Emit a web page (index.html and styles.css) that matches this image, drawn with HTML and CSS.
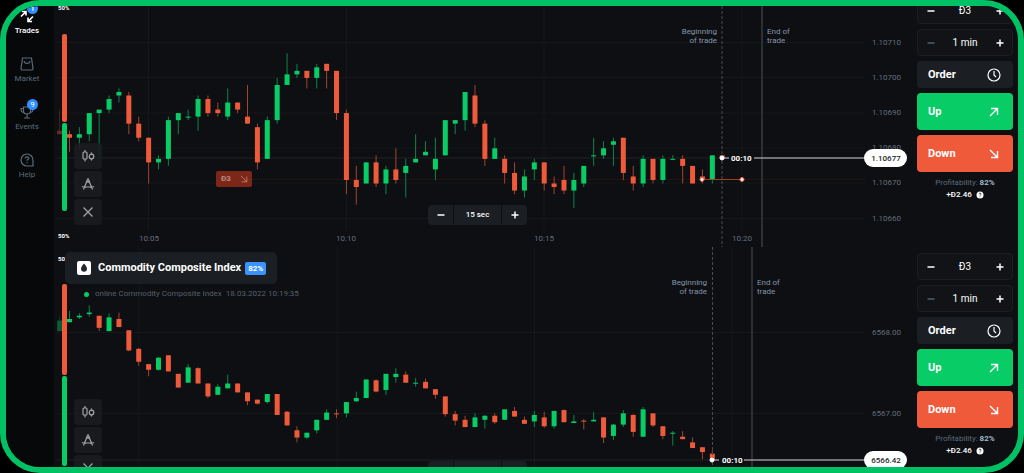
FILE: index.html
```html
<!DOCTYPE html>
<html lang="en">
<head>
    <meta charset="utf-8">
    <title>Trading terminal</title>
    <link rel="stylesheet" href="styles.css">
</head>
<body>
    <!-- shared icons -->
    <svg class="sprite" aria-hidden="true">
        <symbol id="icon-candles" viewBox="0 0 14 14">
            <path d="M4 1v2M4 10v2.500M10.500 3.500v1.500M10.500 10v1.500"/>
            <rect x="2" y="3" width="4" height="7" rx="1"/>
            <circle cx="10.500" cy="7.500" r="2.300"/>
        </symbol>
        <symbol id="icon-tools" viewBox="0 0 14 14">
            <path d="M7 1v2M6 4L2.500 12.500M8 4l3.500 8.500M1 9.500c2 1 3 .8 4 .5h4c1 .3 2 .5 4-.5"/>
            <circle cx="7" cy="4" r="1.200"/>
        </symbol>
        <symbol id="icon-close" viewBox="0 0 14 14">
            <path d="M2.500 2.500l9 9M11.500 2.500l-9 9"/>
        </symbol>
        <symbol id="icon-clock" viewBox="0 0 14 14">
            <circle cx="7" cy="7" r="6"/>
            <path d="M7 3v4l2 2"/>
        </symbol>
        <symbol id="icon-up" viewBox="0 0 10 10">
            <path d="M1 9L8.500 1.500M2 1.500h6.500V8"/>
        </symbol>
        <symbol id="icon-down" viewBox="0 0 10 10">
            <path d="M1 1l7.500 7.500M2 8.500h6.500V2"/>
        </symbol>
        <symbol id="icon-minus" viewBox="0 0 8 8">
            <path d="M.500 4h7"/>
        </symbol>
        <symbol id="icon-plus" viewBox="0 0 8 8">
            <path d="M.500 4h7M4 .500v7"/>
        </symbol>
        <symbol id="icon-info" viewBox="0 0 8 8">
            <circle cx="4" cy="4" r="3.500" fill="#fff" stroke="none"/>
            <path d="M3 3.200c0-1.400 2.200-1.300 2 0-.1.600-1 .7-1 1.400M4 5.600v.7" stroke="#0e0f13" stroke-width=".8"/>
        </symbol>
    </svg>

    <div class="frame">
        <div class="terminal">
            <nav class="nav">
                <a href="#trades" class="nav-item active">
                    <span class="nav-icon">
                        <svg viewBox="0 0 16 16"><path d="M2 8.500L7 3.500M3 3.500h4v4M14 8.500L9 13.500M9 9.500v4h4"/></svg>
                        <span class="badge">1</span>
                    </span>
                    Trades
                </a>
                <a href="#market" class="nav-item">
                    <span class="nav-icon">
                        <svg viewBox="0 0 16 16"><path d="M3.500 2h9l1.500 10.500a1.500 1.500 0 0 1-1.500 1.500h-9A1.500 1.500 0 0 1 2 12.500zM5 5c.5 3.200 5.500 3.200 6 0"/></svg>
                    </span>
                    Market
                </a>
                <a href="#events" class="nav-item">
                    <span class="nav-icon">
                        <svg viewBox="0 0 16 16"><path d="M4.500 3h7v4c0 4-7 4-7 0zM4.500 4.500H2c0 3 1 4 3 4M11.500 4.500H14c0 3-1 4-3 4M8 10v3.500M5 14h6"/></svg>
                        <span class="badge">9</span>
                    </span>
                    Events
                </a>
                <a href="#help" class="nav-item">
                    <span class="nav-icon">
                        <svg viewBox="0 0 16 16"><path d="M14 14H8a6 6 0 1 1 6-6zM6.300 6.500c0-2.300 3.600-2.200 3.400 0-.2 1-1.700 1.100-1.700 2.300M8 10.300v1"/></svg>
                    </span>
                    Help
                </a>
            </nav>

            <main class="boards">
                <section class="board">
                    <div class="chart">
                        <svg class="plot" viewBox="0 0 860 256">
                            <path class="grid" d="M3 51.500h808M3 86.500h808M3 122h808M3 157h808M3 192h808M3 227.500h808M94.500 0v239M292.500 0v239M490 0v239M688 0v239"/>
                            <path class="deal-level" d="M198 188.500h613"/>
                            <path class="price-level" d="M3 167h665"/>
                            <g class="axis">
                                <text x="818" y="54">1.10710</text>
                                <text x="818" y="89">1.10700</text>
                                <text x="818" y="124">1.10690</text>
                                <text x="818" y="159">1.10680</text>
                                <text x="818" y="194">1.10670</text>
                                <text x="818" y="230">1.10660</text>
                                <text class="time" x="95" y="250">10:05</text>
                                <text class="time" x="292" y="250">10:10</text>
                                <text class="time" x="490" y="250">10:15</text>
                                <text class="time" x="688" y="250">10:20</text>
                            </g>
                            <g id="candles-currency"></g>
                            <path class="trade-start" d="M668 0v256"/>
                            <path class="trade-end" d="M708 0v256"/>
                            <g class="note">
                                <text class="right" x="663" y="43">Beginning</text>
                                <text class="right" x="663" y="52">of trade</text>
                                <text x="713" y="43">End of</text>
                                <text x="713" y="52">trade</text>
                            </g>
                            <path class="deal-line" d="M648 188.500h40"/>
                            <circle class="deal-dot" cx="648" cy="188.500" r="2"/>
                            <circle class="deal-dot" cx="688" cy="188.500" r="2"/>
                            <path class="price-line" d="M668 167h7M700 167h111"/>
                            <circle class="price-dot" cx="668" cy="167" r="2"/>
                            <text class="timer" x="677" y="170">00:10</text>
                            <rect class="pill" x="810" y="158" width="43" height="18" rx="9"/>
                            <text class="pill-text" x="832" y="170">1.10677</text>
                            <rect class="bar-down" x="8" y="43" width="5" height="88" rx="2"/>
                            <rect class="bar-up" x="8" y="132" width="5" height="88" rx="2"/>
                            <text class="share" x="4" y="19">50%</text>
                            <text class="share" x="4" y="247">50%</text>
                        </svg>
                        <div class="deal-tag">Đ3 <svg><use href="#icon-down"/></svg></div>
                        <div class="tools">
                            <button aria-label="Chart type"><svg><use href="#icon-candles"/></svg></button>
                            <button aria-label="Drawing tools"><svg><use href="#icon-tools"/></svg></button>
                            <button aria-label="Close"><svg><use href="#icon-close"/></svg></button>
                        </div>
                        <div class="interval">
                            <button aria-label="Shorter interval"><svg><use href="#icon-minus"/></svg></button>
                            <span>15 sec</span>
                            <button aria-label="Longer interval"><svg><use href="#icon-plus"/></svg></button>
                        </div>
                    </div>
                    <form class="panel">
                        <div class="stepper">
                            <button type="button" aria-label="Less"><svg><use href="#icon-minus"/></svg></button>
                            <input type="text" value="Đ3" aria-label="Amount">
                            <button type="button" aria-label="More"><svg><use href="#icon-plus"/></svg></button>
                        </div>
                        <div class="stepper">
                            <button type="button" class="muted" aria-label="Shorter"><svg><use href="#icon-minus"/></svg></button>
                            <input type="text" value="1 min" aria-label="Duration">
                            <button type="button" aria-label="Longer"><svg><use href="#icon-plus"/></svg></button>
                        </div>
                        <button type="button" class="order">Order <svg><use href="#icon-clock"/></svg></button>
                        <button type="button" class="trade up">Up <svg><use href="#icon-up"/></svg></button>
                        <button type="button" class="trade down">Down <svg><use href="#icon-down"/></svg></button>
                        <div class="profit">
                            Profitability: <b>82%</b>
                            <div class="payout">+Đ2.46 <svg><use href="#icon-info"/></svg></div>
                        </div>
                    </form>
                </section>

                <section class="board">
                    <div class="chart">
                        <svg class="plot" viewBox="0 0 860 256">
                            <path class="grid" d="M3 85.500h808M3 166.500h808M85 0v239M283 0v239M480.500 0v239M678 0v239"/>
                            <path class="price-level" d="M3 213h655"/>
                            <g class="axis">
                                <text x="818" y="88">6568.00</text>
                                <text x="818" y="169">6567.00</text>
                            </g>
                            <g id="candles-index"></g>
                            <path class="trade-start" d="M658.500 0v256"/>
                            <path class="trade-end" d="M698 0v256"/>
                            <g class="note">
                                <text class="right" x="653" y="38">Beginning</text>
                                <text class="right" x="653" y="47">of trade</text>
                                <text x="703" y="38">End of</text>
                                <text x="703" y="47">trade</text>
                            </g>
                            <path class="price-line" d="M658 213h7M690 213h121"/>
                            <circle class="price-dot" cx="658" cy="213" r="2"/>
                            <text class="timer" x="668" y="216">00:10</text>
                            <rect class="pill" x="810" y="204" width="43" height="18" rx="9"/>
                            <text class="pill-text" x="832" y="216">6566.42</text>
                            <rect class="bar-down" x="8" y="37" width="5" height="91" rx="2"/>
                            <rect class="bar-up" x="8" y="129" width="5" height="90" rx="2"/>
                            <text class="share" x="4" y="14">50%</text>
                        </svg>
                        <div class="asset">
                            <svg viewBox="0 0 14 14">
                                <rect width="14" height="14" rx="2" fill="#fff"/>
                                <path d="M7 2.500c2 2.400 3 3.700 3 5.300a3 3 0 0 1-6 0c0-1.600 1-2.900 3-5.300z" fill="#24272c"/>
                            </svg>
                            <strong>Commodity Composite Index</strong>
                            <span class="rate">82%</span>
                        </div>
                        <div class="feed"><i></i><span>online Commodity Composite Index</span><span>18.03.2022 10:19:35</span></div>
                        <div class="tools">
                            <button aria-label="Chart type"><svg><use href="#icon-candles"/></svg></button>
                            <button aria-label="Drawing tools"><svg><use href="#icon-tools"/></svg></button>
                            <button aria-label="Close"><svg><use href="#icon-close"/></svg></button>
                        </div>
                        <div class="interval">
                            <button aria-label="Shorter interval"><svg><use href="#icon-minus"/></svg></button>
                            <span>15 sec</span>
                            <button aria-label="Longer interval"><svg><use href="#icon-plus"/></svg></button>
                        </div>
                    </div>
                    <form class="panel">
                        <div class="stepper">
                            <button type="button" aria-label="Less"><svg><use href="#icon-minus"/></svg></button>
                            <input type="text" value="Đ3" aria-label="Amount">
                            <button type="button" aria-label="More"><svg><use href="#icon-plus"/></svg></button>
                        </div>
                        <div class="stepper">
                            <button type="button" class="muted" aria-label="Shorter"><svg><use href="#icon-minus"/></svg></button>
                            <input type="text" value="1 min" aria-label="Duration">
                            <button type="button" aria-label="Longer"><svg><use href="#icon-plus"/></svg></button>
                        </div>
                        <button type="button" class="order">Order <svg><use href="#icon-clock"/></svg></button>
                        <button type="button" class="trade up">Up <svg><use href="#icon-up"/></svg></button>
                        <button type="button" class="trade down">Down <svg><use href="#icon-down"/></svg></button>
                        <div class="profit">
                            Profitability: <b>82%</b>
                            <div class="payout">+Đ2.46 <svg><use href="#icon-info"/></svg></div>
                        </div>
                    </form>
                </section>
            </main>
        </div>
    </div>

    <script src="script.js"></script>
</body>
</html>
```

FILE: styles.css
```css
* {
    box-sizing: border-box;
}
body {
    margin: 0;
    background: #000;
    color: #fff;
    font: 8px/10px Roboto, "Liberation Sans", sans-serif;
}
button, input {
    font: inherit;
    color: inherit;
    background: none;
    border: 0;
    margin: 0;
    padding: 0;
}
svg {
    fill: none;
    stroke: currentColor;
}
.sprite {
    display: none;
}
.frame {
    height: 100vh;
    border: 6px solid #00c265;
    border-radius: 40px;
    background: #0e0f13;
    overflow: hidden;
}
.terminal {
    display: flex;
    margin-top: -15px;
}

/* left menu */
.nav {
    flex: 0 0 48px;
    display: flex;
    flex-direction: column;
    gap: 20px;
    padding: 17px 6px 0 0;
    background: #06080a;
}
.nav-item {
    display: flex;
    flex-direction: column;
    align-items: center;
    gap: 2px;
    color: #5c6c7a;
    text-decoration: none;
}
.nav-item.active {
    color: #fff;
    font-weight: 500;
}
.nav-icon {
    position: relative;
    height: 16px;
}
.nav-icon svg {
    width: 16px;
    height: 16px;
    stroke-width: 1.2px;
}
.active .nav-icon svg {
    stroke-width: 1.6px;
}
.badge {
    position: absolute;
    top: -5px;
    left: 8px;
    width: 11px;
    height: 11px;
    border-radius: 50%;
    background: #2f8dff;
    color: #fff;
    line-height: 11px;
    text-align: center;
}

.boards {
    flex: 1;
    min-width: 0;
}
.board {
    display: flex;
}
.chart {
    flex: 1;
    min-width: 0;
    position: relative;
}
.plot {
    display: block;
    width: 100%;
}

/* chart drawing */
.plot text {
    stroke: none;
    fill: #fff;
}
.grid {
    stroke: #15171b;
}
.plot .axis text {
    fill: #636e79;
}
.plot .time {
    text-anchor: middle;
}
.plot .note text {
    fill: #8496a8;
}
.plot .right {
    text-anchor: end;
}
.price-level {
    stroke: #202226;
}
.deal-level {
    stroke: #24130f;
}
.trade-start {
    stroke: #4a4c50;
    stroke-dasharray: 3 2;
}
.trade-end {
    stroke: #2d2f33;
    stroke-width: 2px;
}
.price-line {
    stroke: #949597;
    stroke-width: 1.4px;
}
.deal-line {
    stroke: #a83a24;
}
.price-dot, .deal-dot {
    fill: #fff;
    stroke: #ee5a3a;
}
.price-dot {
    stroke: #fff;
}
.plot .timer {
    font-size: 8px;
    font-weight: 700;
}
.pill {
    fill: #fff;
    stroke: none;
}
.plot .pill-text {
    fill: #24272c;
    font-weight: 500;
    text-anchor: middle;
}
.plot .share {
    font-size: 6px;
    font-weight: 700;
}
.bar-up, .candle-up rect {
    fill: #08cc65;
    stroke: none;
}
.bar-down, .candle-down rect {
    fill: #ee5a3a;
    stroke: none;
}
.candle-up path {
    stroke: #0a8548;
}
.candle-down path {
    stroke: #a0452f;
}
.faded {
    opacity: 0.4;
}

/* controls over the chart */
.deal-tag {
    position: absolute;
    top: 180px;
    left: 162px;
    display: flex;
    align-items: center;
    justify-content: space-between;
    width: 36px;
    height: 16px;
    padding: 0 4px 0 5px;
    border-radius: 2px;
    background: #7d2718;
    color: #b98a80;
    font-weight: 700;
}
.deal-tag svg {
    width: 8px;
    height: 8px;
}
.tools {
    position: absolute;
    top: 152px;
    left: 20px;
    display: flex;
    flex-direction: column;
    gap: 2px;
}
.tools button {
    display: grid;
    place-items: center;
    width: 28px;
    height: 26px;
    border-radius: 4px;
    background: rgba(26, 28, 32, 0.85);
    color: #a5a6a8;
}
.tools svg {
    width: 14px;
    height: 14px;
    stroke-width: 1.2px;
}
.interval {
    position: absolute;
    top: 214px;
    left: 374px;
    display: flex;
    gap: 1px;
    height: 20px;
    line-height: 20px;
    font-weight: 500;
}
.interval button, .interval span {
    display: grid;
    place-items: center;
    width: 25px;
    background: #1b1e23;
}
.interval span {
    width: 47px;
}
.interval button:first-child {
    border-radius: 4px 0 0 4px;
}
.interval button:last-child {
    border-radius: 0 4px 4px 0;
}
.interval svg, .stepper svg {
    width: 8px;
    height: 8px;
    stroke-width: 1.5px;
}
.asset {
    position: absolute;
    top: 5px;
    left: 11px;
    display: flex;
    align-items: center;
    height: 32px;
    padding: 0 11px 0 12px;
    border-radius: 5px;
    background: #1b1e22;
    font-size: 11px;
}
.asset svg {
    width: 14px;
    height: 14px;
    margin-right: 7px;
    stroke: none;
}
.rate {
    margin-left: 4px;
    padding: 0 3px;
    border-radius: 2px;
    background: #3b93ff;
    font-size: 8px;
    font-weight: 700;
    line-height: 13px;
}
.feed {
    position: absolute;
    top: 42px;
    left: 30px;
    display: flex;
    align-items: center;
    gap: 4px;
    color: #55606a;
}
.feed i {
    width: 5px;
    height: 5px;
    margin-right: 2px;
    border-radius: 50%;
    background: #08cc65;
}

/* order panel */
.panel {
    flex: 0 0 104px;
    min-width: 0;
    display: flex;
    flex-direction: column;
    gap: 5px;
    padding: 6px 5px 0 3px;
    font-size: 10px;
}
.stepper {
    display: flex;
    align-items: center;
    height: 27px;
    border: 1px solid #1b1e22;
    border-radius: 4px;
    background: #111317;
}
.stepper button {
    display: grid;
    place-items: center;
    flex: 0 0 25px;
    height: 100%;
}
.stepper .muted {
    color: #52616e;
}
.stepper input {
    flex: 1;
    width: 100%;
    min-width: 0;
    text-align: center;
}
.order, .trade {
    display: flex;
    align-items: center;
    justify-content: space-between;
    height: 27px;
    padding: 0 12px 0 11px;
    border-radius: 4px;
    background: #1b1e22;
    font-size: 11px;
    font-weight: 700;
}
.order svg {
    width: 14px;
    height: 14px;
    stroke-width: 1.2px;
}
.trade {
    height: 37px;
    padding-right: 14px;
}
.trade svg {
    width: 10px;
    height: 10px;
    stroke-width: 1.4px;
}
.trade.up {
    background: #08cc65;
}
.trade.down {
    background: #ee5a3a;
}
.profit {
    color: #5c6c7a;
    font-size: 8px;
    line-height: 12px;
    text-align: center;
}
.profit b {
    color: #a3b8c8;
}
.payout {
    display: flex;
    align-items: center;
    justify-content: center;
    gap: 4px;
    color: #fff;
    font-weight: 500;
}
.payout svg {
    width: 8px;
    height: 8px;
}
```

FILE: script.js
```js
// open, high, low, close

// points over 1.10600
const currency = [
    [85,91,84,84], [84,85,79,83], [83,86,80,84], [84,90,82,90], [90,91,77,91],
    [91,95,90,94], [95,97,93,96], [95,96,84,87], [87,89,82,83], [83,83,70,76],
    [76,78,74,77], [77,89,75,88], [88,90,84,90], [89,91,88,89], [89,95,85,94],
    [94,95,89,90], [91,93,89,90], [89,97,88,93], [93,93,90,91], [89,98,87,87],
    [86,87,74,76], [77,89,77,88], [88,100,87,98], [98,107,98,101], [101,104,100,102],
    [102,102,97,100], [100,104,97,103], [104,104,97,102], [102,102,88,90], [90,91,67,71],
    [71,75,64,69], [70,76,70,76], [76,78,69,70], [70,75,67,74], [74,80,70,71],
    [73,77,66,75], [76,84,76,77], [78,82,78,79], [74,83,71,77], [78,88,78,88],
    [87,88,84,88], [88,96,85,96], [95,98,86,87], [87,88,75,77], [77,83,77,80],
    [77,78,70,73], [73,76,67,68], [68,74,66,72], [74,77,71,76], [76,76,68,70],
    [70,72,67,69], [71,75,67,68], [68,73,63,71], [70,75,69,75], [78,83,75,78],
    [78,82,77,80], [81,83,75,82], [83,83,71,73], [72,75,68,70], [70,78,69,77],
    [77,77,70,71], [71,78,70,77], [77,78,77,77], [77,78,70,75], [75,75,70,70],
    [72,74,70,71], [71,78,70,78], [78,78,77,77]
];

// hundredths over 6566.00
const index = [
    [202,220,202,215], [213,227,213,217], [219,224,217,221], [223,234,220,225], [221,221,202,206],
    [202,224,202,219], [217,225,207,207], [203,203,177,178], [180,181,159,164], [161,161,146,154],
    [154,170,153,169], [172,172,152,152], [149,149,132,132], [138,161,138,157], [156,157,137,137],
    [137,137,119,121], [123,136,123,133], [131,148,131,137], [137,137,126,126], [126,126,110,115],
    [117,117,111,112], [114,124,112,124], [124,124,98,98], [102,103,85,85], [79,84,64,70],
    [70,76,68,76], [79,92,75,92], [92,105,92,101], [100,105,94,99], [100,114,95,114],
    [115,127,114,119], [119,142,119,142], [141,142,126,127], [129,149,123,149], [145,156,138,149],
    [148,152,138,138], [138,144,133,138], [139,143,131,131], [130,130,118,123], [121,121,96,99],
    [99,103,85,91], [92,97,83,83], [83,100,83,95], [92,98,81,97], [97,100,87,89],
    [92,105,92,105], [103,108,96,96], [92,96,87,87], [90,103,83,98], [95,102,82,84],
    [84,103,81,103], [104,105,89,89], [88,98,88,90], [91,93,80,90], [90,102,90,92],
    [95,95,63,70], [72,87,67,86], [86,104,83,100], [98,99,71,77], [71,108,71,105],
    [100,100,83,85], [84,84,68,72], [76,78,60,76], [71,78,68,68], [64,70,57,57],
    [58,58,43,52], [50,54,42,42]
];

// level is the y of the top price, unit is the height of one point
function drawCandles(id, candles, top, level, unit) {
    const y = price => level + (top - price) * unit;

    document.getElementById(id).innerHTML = candles.map(([open, high, low, close], i) => {
        const x = 5.6 + i * 9.89;
        const bodyTop = y(Math.max(open, close));
        const height = Math.max(Math.abs(open - close) * unit, 1);
        const type = close < open ? 'candle-down' : 'candle-up';
        return `<g class="${type}${i === 0 ? ' faded' : ''}">
            <path d="M${x} ${y(high)}V${y(low)}"/>
            <rect x="${x - 2.5}" y="${bodyTop}" width="5" height="${height}"/>
        </g>`;
    }).join('');
}

drawCandles('candles-currency', currency, 110, 51.7, 3.52);
drawCandles('candles-index', index, 200, 85.7, 0.8065);
```
